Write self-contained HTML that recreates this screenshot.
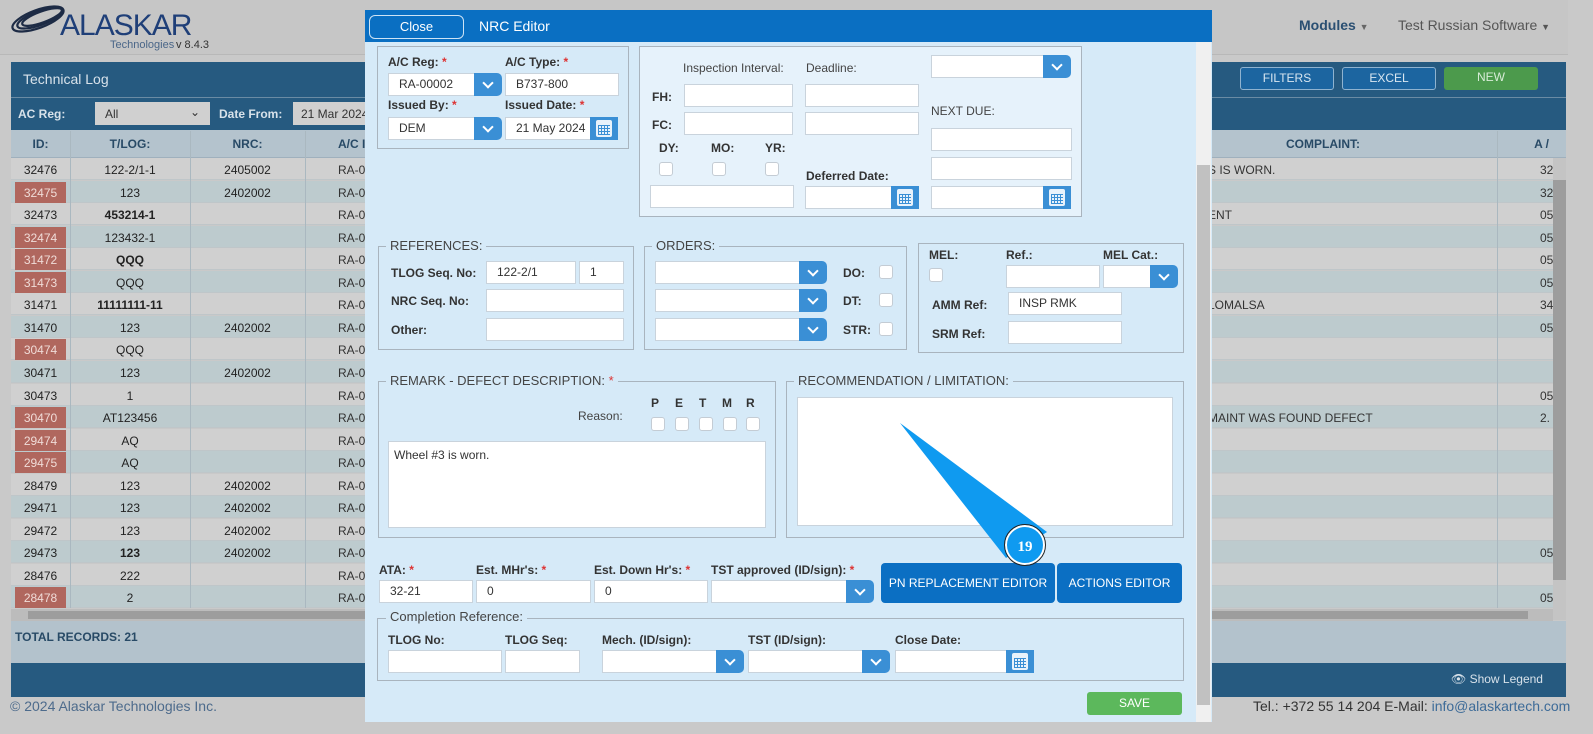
<!DOCTYPE html>
<html><head><meta charset="utf-8">
<style>
*{box-sizing:border-box;margin:0;padding:0}
body{width:1593px;height:734px;overflow:hidden;background:#c9c9c9;font-family:"Liberation Sans",Arial,sans-serif;font-size:12px;color:#333;position:relative;white-space:nowrap}
.a{position:absolute}
.b{font-weight:bold}
.cell{position:absolute;text-align:center;font-size:12px;color:#222}
.inp{position:absolute;background:#fff;border:1px solid #c9d3dc;height:23px;font-size:12px;line-height:21px;padding-left:10px;color:#333;overflow:hidden}
.dd{position:absolute;background:#3a8fd5;height:23px;width:28px;border-radius:0 5px 5px 0}
.dd:after{content:"";position:absolute;left:10px;top:6px;width:6px;height:6px;border-right:2px solid #fff;border-bottom:2px solid #fff;transform:rotate(45deg)}
.cal{position:absolute;background:#3a8fd5;height:23px;width:28px}
.cal i{position:absolute;left:6px;top:3px;width:16px;height:17px;border-radius:2px;background:#e8f2fb}
.cal i:before{content:"";position:absolute;left:2px;top:5px;width:12px;height:10px;background:repeating-linear-gradient(90deg,#3a8fd5 0 1px,transparent 1px 3px),repeating-linear-gradient(0deg,#3a8fd5 0 1px,transparent 1px 3px)}
.cb{position:absolute;width:14px;height:14px;background:#fff;border:1px solid #c4ccd4;border-radius:3px}
.fs{position:absolute;border:1px solid #a9b4be}
.lg{position:absolute;background:#d6eaf8;padding:0 4px;font-size:13px;color:#444}
.lbl{position:absolute;font-size:12px;font-weight:bold;color:#333}
.st{color:#d33}
.btn{position:absolute;background:#0b6fc3;color:#fff;border-radius:4px;text-align:center;font-size:12px}
</style></head><body>

<div class="a" style="left:0;top:0;width:1568px;height:55px;background:#c6c6c6;border-bottom:1px solid #b8b8b8"></div>
<svg class="a" style="left:8px;top:4px" width="60" height="34" viewBox="0 0 60 34">
<g fill="none" stroke="#1d2b45" stroke-width="2.2">
<ellipse cx="30" cy="15" rx="27" ry="9" transform="rotate(-20 30 15)"/>
<ellipse cx="32" cy="14" rx="24" ry="7" transform="rotate(-20 32 14)"/>
<ellipse cx="34" cy="13" rx="21" ry="5.5" transform="rotate(-20 34 13)"/>
</g></svg>
<div class="a" style="left:60px;top:9px;font-size:30px;color:#1f3f78;letter-spacing:-1px">ALASKAR</div>
<div class="a" style="left:110px;top:39px;font-size:11px;color:#4a6688">Technologies</div>
<div class="a" style="left:176px;top:39px;font-size:11px;color:#333">v 8.4.3</div>
<div class="a b" style="left:1299px;top:17px;font-size:14px;color:#2a4f72">Modules <span style="font-size:9px;color:#666">▼</span></div>
<div class="a" style="left:1398px;top:17px;font-size:14px;color:#555">Test Russian Software <span style="font-size:9px">▼</span></div>

<div class="a" style="left:11px;top:62px;width:1555px;height:68px;background:#265a80"></div>
<div class="a" style="left:11px;top:97px;width:1555px;height:1px;background:#6a8ba4"></div>
<div class="a" style="left:23px;top:71px;font-size:14px;color:#d8e2ea">Technical Log</div>
<div class="a b" style="left:18px;top:107px;font-size:12px;color:#d8e2ea">AC Reg:</div>
<div class="a" style="left:95px;top:102px;width:115px;height:23px;background:#d0d0d0;font-size:12px;padding:5px 10px">All<span style="position:absolute;right:10px;top:3px">⌄</span></div>
<div class="a b" style="left:219px;top:107px;color:#d8e2ea">Date From:</div>
<div class="a" style="left:293px;top:102px;width:80px;height:23px;background:#d0d0d0;padding:5px 8px;overflow:hidden">21 Mar 2024</div>
<div class="a" style="left:1240px;top:67px;width:94px;height:23px;border:1px solid #8fb3d0;border-radius:3px;background:#1c65a0;color:#d8e6f0;text-align:center;line-height:21px">FILTERS</div>
<div class="a" style="left:1342px;top:67px;width:94px;height:23px;border:1px solid #8fb3d0;border-radius:3px;background:#1c65a0;color:#d8e6f0;text-align:center;line-height:21px">EXCEL</div>
<div class="a" style="left:1444px;top:67px;width:94px;height:23px;border-radius:3px;background:#4c9a4c;color:#d8ecd8;text-align:center;line-height:21px">NEW</div>

<div class="a" style="left:11px;top:130px;width:1555px;height:28px;background:#b4c3cd;border-bottom:1px solid #9fb0bd"></div>
<div class="cell b" style="left:11px;top:137px;width:59px;color:#284a66">ID:</div>
<div class="cell b" style="left:70px;top:137px;width:120px;color:#284a66">T/LOG:</div>
<div class="cell b" style="left:190px;top:137px;width:115px;color:#284a66">NRC:</div>
<div class="a b" style="left:338px;top:137px;color:#284a66">A/C I</div>
<div class="cell b" style="left:1150px;top:137px;width:346px;color:#284a66">COMPLAINT:</div>
<div class="cell b" style="left:1497px;top:137px;width:56px;color:#284a66;text-align:right;padding-right:4px">A /</div>

<div id="rows"></div>
<div class="a" style="left:11px;top:609px;width:1542px;height:12px;background:#bcbcbc"></div>
<div class="a" style="left:28px;top:611px;width:1500px;height:8px;background:#9d9d9d"></div>
<div class="a" style="left:1553px;top:158px;width:13px;height:462px;background:#c4c4c4"></div>
<div class="a" style="left:1553px;top:180px;width:13px;height:400px;background:#9d9d9d"></div>
<div class="a" style="left:11px;top:621px;width:1555px;height:42px;background:#b3c2cc"></div>
<div class="a b" style="left:15px;top:630px;font-size:12px;color:#284a66">TOTAL RECORDS: 21</div>
<div class="a" style="left:11px;top:663px;width:1555px;height:34px;background:#265a80"></div>
<div class="a" style="left:1451px;top:672px;font-size:12px;color:#d8e2ea">👁 Show Legend</div>
<div class="a" style="left:10px;top:698px;font-size:14px;color:#4d6b8c">© 2024 Alaskar Technologies Inc.</div>
<div class="a" style="left:1253px;top:698px;font-size:14px;color:#333">Tel.: +372 55 14 204 E-Mail: <span style="color:#3d6b98">info@alaskartech.com</span></div>

<div class="a" style="left:365px;top:10px;width:847px;height:712px;background:#d6eaf8"></div>
<div class="a" style="left:365px;top:10px;width:847px;height:32px;background:#0a6fc2"></div>
<div class="a" style="left:369px;top:15px;width:95px;height:24px;border:1px solid #cde3f5;border-radius:6px;color:#fff;text-align:center;line-height:21px;font-size:13px">Close</div>
<div class="a" style="left:479px;top:18px;color:#fff;font-size:14px">NRC Editor</div>
<div class="a" style="left:1196px;top:42px;width:15px;height:680px;background:#f0f0f0"></div>
<div class="a" style="left:1197px;top:165px;width:13px;height:540px;background:#c1c1c1"></div>

<div class="fs" style="left:377px;top:46px;width:252px;height:103px"></div>
<div class="lbl" style="left:388px;top:55px">A/C Reg: <span class="st">*</span></div>
<div class="lbl" style="left:505px;top:55px">A/C Type: <span class="st">*</span></div>
<div class="inp" style="left:388px;top:73px;width:88px">RA-00002</div><div class="dd" style="left:474px;top:73px"></div>
<div class="inp" style="left:505px;top:73px;width:114px">B737-800</div>
<div class="lbl" style="left:388px;top:98px">Issued By: <span class="st">*</span></div>
<div class="lbl" style="left:505px;top:98px">Issued Date: <span class="st">*</span></div>
<div class="inp" style="left:388px;top:117px;width:88px">DEM</div><div class="dd" style="left:474px;top:117px"></div>
<div class="inp" style="left:505px;top:117px;width:86px">21 May 2024</div><div class="cal" style="left:590px;top:117px"><i></i></div>

<div class="fs" style="left:639px;top:46px;width:443px;height:171px;background:#e6f2fb"></div>
<div class="a" style="left:683px;top:61px;color:#444">Inspection Interval:</div>
<div class="a" style="left:806px;top:61px;color:#444">Deadline:</div>
<div class="lbl" style="left:652px;top:90px">FH:</div>
<div class="lbl" style="left:652px;top:118px">FC:</div>
<div class="inp" style="left:684px;top:84px;width:109px"></div>
<div class="inp" style="left:684px;top:112px;width:109px"></div>
<div class="inp" style="left:805px;top:84px;width:114px"></div>
<div class="inp" style="left:805px;top:112px;width:114px"></div>
<div class="lbl" style="left:659px;top:141px">DY:</div>
<div class="lbl" style="left:711px;top:141px">MO:</div>
<div class="lbl" style="left:765px;top:141px">YR:</div>
<div class="cb" style="left:659px;top:162px"></div><div class="cb" style="left:712px;top:162px"></div><div class="cb" style="left:765px;top:162px"></div>
<div class="inp" style="left:650px;top:185px;width:144px"></div>
<div class="lbl" style="left:806px;top:169px">Deferred Date:</div>
<div class="inp" style="left:805px;top:186px;width:87px"></div><div class="cal" style="left:891px;top:186px"><i></i></div>
<div class="inp" style="left:931px;top:55px;width:114px"></div><div class="dd" style="left:1043px;top:55px"></div>
<div class="a" style="left:931px;top:104px;color:#444">NEXT DUE:</div>
<div class="inp" style="left:931px;top:128px;width:141px"></div>
<div class="inp" style="left:931px;top:157px;width:141px"></div>
<div class="inp" style="left:931px;top:186px;width:113px"></div><div class="cal" style="left:1043px;top:186px"><i></i></div>

<div class="fs" style="left:378px;top:246px;width:256px;height:104px"></div>
<div class="lg" style="left:386px;top:238px">REFERENCES:</div>
<div class="lbl" style="left:391px;top:266px">TLOG Seq. No:</div>
<div class="lbl" style="left:391px;top:294px">NRC Seq. No:</div>
<div class="lbl" style="left:391px;top:323px">Other:</div>
<div class="inp" style="left:486px;top:261px;width:90px">122-2/1</div>
<div class="inp" style="left:579px;top:261px;width:45px">1</div>
<div class="inp" style="left:486px;top:289px;width:138px"></div>
<div class="inp" style="left:486px;top:318px;width:138px"></div>

<div class="fs" style="left:644px;top:246px;width:263px;height:104px"></div>
<div class="lg" style="left:652px;top:238px">ORDERS:</div>
<div class="inp" style="left:655px;top:261px;width:146px"></div><div class="dd" style="left:799px;top:261px"></div>
<div class="inp" style="left:655px;top:289px;width:146px"></div><div class="dd" style="left:799px;top:289px"></div>
<div class="inp" style="left:655px;top:318px;width:146px"></div><div class="dd" style="left:799px;top:318px"></div>
<div class="lbl" style="left:843px;top:266px">DO:</div><div class="cb" style="left:879px;top:265px"></div>
<div class="lbl" style="left:843px;top:294px">DT:</div><div class="cb" style="left:879px;top:293px"></div>
<div class="lbl" style="left:843px;top:323px">STR:</div><div class="cb" style="left:879px;top:322px"></div>

<div class="fs" style="left:918px;top:243px;width:266px;height:110px"></div>
<div class="lbl" style="left:929px;top:248px">MEL:</div>
<div class="lbl" style="left:1006px;top:248px">Ref.:</div>
<div class="lbl" style="left:1103px;top:248px">MEL Cat.:</div>
<div class="cb" style="left:929px;top:268px"></div>
<div class="inp" style="left:1006px;top:265px;width:94px"></div>
<div class="inp" style="left:1103px;top:265px;width:50px"></div><div class="dd" style="left:1150px;top:265px"></div>
<div class="lbl" style="left:932px;top:298px">AMM Ref:</div>
<div class="lbl" style="left:932px;top:327px">SRM Ref:</div>
<div class="inp" style="left:1008px;top:292px;width:114px">INSP RMK</div>
<div class="inp" style="left:1008px;top:321px;width:114px"></div>

<div class="fs" style="left:378px;top:381px;width:398px;height:157px"></div>
<div class="lg" style="left:386px;top:373px">REMARK - DEFECT DESCRIPTION: <span class="st">*</span></div>
<div class="a" style="left:578px;top:409px;color:#444">Reason:</div>
<div class="lbl" style="left:651px;top:396px">P</div><div class="lbl" style="left:675px;top:396px">E</div><div class="lbl" style="left:699px;top:396px">T</div><div class="lbl" style="left:722px;top:396px">M</div><div class="lbl" style="left:746px;top:396px">R</div>
<div class="cb" style="left:651px;top:417px"></div><div class="cb" style="left:675px;top:417px"></div><div class="cb" style="left:699px;top:417px"></div><div class="cb" style="left:723px;top:417px"></div><div class="cb" style="left:746px;top:417px"></div>
<div class="inp" style="left:388px;top:441px;width:378px;height:87px;line-height:14px;padding:6px 5px">Wheel #3 is worn.</div>

<div class="fs" style="left:786px;top:381px;width:398px;height:157px"></div>
<div class="lg" style="left:794px;top:373px">RECOMMENDATION / LIMITATION:</div>
<div class="inp" style="left:797px;top:397px;width:376px;height:129px"></div>

<div class="lbl" style="left:379px;top:563px">ATA: <span class="st">*</span></div>
<div class="lbl" style="left:476px;top:563px">Est. MHr's: <span class="st">*</span></div>
<div class="lbl" style="left:594px;top:563px">Est. Down Hr's: <span class="st">*</span></div>
<div class="lbl" style="left:711px;top:563px">TST approved (ID/sign): <span class="st">*</span></div>
<div class="inp" style="left:379px;top:580px;width:94px">32-21</div>
<div class="inp" style="left:476px;top:580px;width:115px">0</div>
<div class="inp" style="left:594px;top:580px;width:114px">0</div>
<div class="inp" style="left:711px;top:580px;width:137px"></div><div class="dd" style="left:846px;top:580px"></div>
<div class="btn" style="left:881px;top:563px;width:174px;height:40px;line-height:40px">PN REPLACEMENT EDITOR</div>
<div class="btn" style="left:1057px;top:563px;width:125px;height:40px;line-height:40px">ACTIONS EDITOR</div>

<div class="fs" style="left:377px;top:618px;width:807px;height:63px"></div>
<div class="lg" style="left:386px;top:609px">Completion Reference:</div>
<div class="lbl" style="left:388px;top:633px">TLOG No:</div>
<div class="lbl" style="left:505px;top:633px">TLOG Seq:</div>
<div class="lbl" style="left:602px;top:633px">Mech. (ID/sign):</div>
<div class="lbl" style="left:748px;top:633px">TST (ID/sign):</div>
<div class="lbl" style="left:895px;top:633px">Close Date:</div>
<div class="inp" style="left:388px;top:650px;width:114px"></div>
<div class="inp" style="left:505px;top:650px;width:75px"></div>
<div class="inp" style="left:602px;top:650px;width:116px"></div><div class="dd" style="left:716px;top:650px"></div>
<div class="inp" style="left:748px;top:650px;width:116px"></div><div class="dd" style="left:862px;top:650px"></div>
<div class="inp" style="left:895px;top:650px;width:112px"></div><div class="cal" style="left:1006px;top:650px"><i></i></div>
<div class="a" style="left:1087px;top:692px;width:95px;height:23px;background:#5cb85c;border-radius:3px;color:#fff;text-align:center;line-height:23px">SAVE</div>

<svg class="a" style="left:0;top:0" width="1593" height="734">
<polygon points="900,423 1047,532 1006,558" fill="#0f9af0"/>
<circle cx="1025" cy="545" r="19" fill="#0f9af0" stroke="#fff" stroke-width="2"/>
<circle cx="1025" cy="545" r="20.5" fill="none" stroke="#222" stroke-width="1"/>
<text x="1025" y="551" text-anchor="middle" font-family="Liberation Serif,serif" font-weight="bold" font-size="15" fill="#fff">19</text>
</svg>

<script>
var d=[["32476","122-2/1-1","2405002",0,"S IS WORN.","32"],["32475","123","2402002",1,"","32"],["32473","453214-1","",0,"ENT","05",1],["32474","123432-1","",1,"","05"],["31472","QQQ","",1,"","05",1],["31473","QQQ","",1,"","05"],["31471","11111111-11","",0,"LOMALSA","34",1],["31470","123","2402002",0,"","05"],["30474","QQQ","",1,"",""],["30471","123","2402002",0,"",""],["30473","1","",0,"","05"],["30470","AT123456","",1,"MAINT WAS FOUND DEFECT","2."],["29474","AQ","",1,"",""],["29475","AQ","",1,"",""],["28479","123","2402002",0,"",""],["29471","123","2402002",0,"",""],["29472","123","2402002",0,"",""],["29473","123","2402002",0,"","05",1],["28476","222","",0,"",""],["28478","2","",1,"","05"]];
var h="";for(var i=0;i<d.length;i++){var r=d[i],t=158+i*22.55,bg=i%2?"#bdcbce":"#d0d0d0";
h+='<div class="a" style="left:11px;top:'+t+'px;width:1542px;height:22px;background:'+bg+';border-bottom:1px solid #bfc6c9"></div>';
if(r[3])h+='<div class="a" style="left:15px;top:'+(t+1)+'px;width:51px;height:21px;background:#b0675e"></div>';
h+='<div class="cell" style="left:11px;top:'+(t+5)+'px;width:59px;color:'+(r[3]?'#f0dcd8':'#222')+'">'+r[0]+'</div>';
h+='<div class="cell'+(r[6]?' b':'')+'" style="left:70px;top:'+(t+5)+'px;width:120px">'+r[1]+'</div>';
h+='<div class="cell" style="left:190px;top:'+(t+5)+'px;width:115px">'+r[2]+'</div>';
h+='<div class="a" style="left:338px;top:'+(t+5)+'px">RA-0</div>';
h+='<div class="a" style="left:1208px;top:'+(t+5)+'px">'+r[4]+'</div>';
h+='<div class="a" style="left:1540px;top:'+(t+5)+'px">'+r[5]+'</div>';}
h+='<div class="a" style="left:70px;top:131px;width:1px;height:477px;background:#aab8c0"></div><div class="a" style="left:190px;top:131px;width:1px;height:477px;background:#aab8c0"></div><div class="a" style="left:305px;top:131px;width:1px;height:477px;background:#aab8c0"></div><div class="a" style="left:1497px;top:131px;width:1px;height:477px;background:#aab8c0"></div>';
document.getElementById("rows").innerHTML=h;
</script>
</body></html>
